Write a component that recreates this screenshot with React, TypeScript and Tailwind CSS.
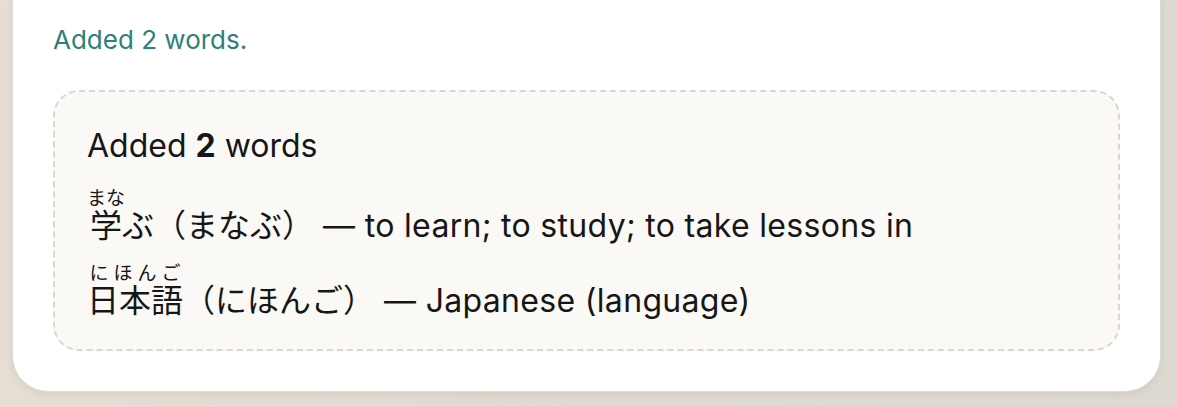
import React from 'react';

type Entry = {
  kanji: string;
  reading: string;
  okurigana: string;
  kana: string;
  meaning: string;
};

const entries: Entry[] = [
  { kanji: '学', reading: 'まな', okurigana: 'ぶ', kana: 'まなぶ', meaning: 'to learn; to study; to take lessons in' },
  { kanji: '日本語', reading: 'にほんご', okurigana: '', kana: 'にほんご', meaning: 'Japanese (language)' },
];

const font = "font-['Inter','Noto_Sans_CJK_JP',sans-serif]";

export default function App() {
  return (
    <div className={`${font} h-[407px] w-full bg-gradient-to-r from-[#e6ddd3] via-[#e0d9cf] to-[#dcd9d0] pl-3 pr-4 pb-[15px]`}>
      <div className="h-full rounded-b-[36px] border-x border-b border-[#dadada] bg-white px-10 pt-[22px] shadow-[0_2px_6px_rgba(120,100,80,0.12)]">
        {/* status line */}
        <p className="text-[26px] leading-[36px] text-[#2f7f7b]">Added 2 words.</p>

        {/* result box */}
        <div className="mt-8 rounded-[26px] border-2 border-dashed border-[#dbd6cf] bg-[#fbf9f5] px-8 pt-[34px] pb-[11px] text-[#161616]">
          <h2 className="text-[32px] leading-[40px]">
            Added <span className="font-bold">2</span> words
          </h2>
          <div className="mt-[22px]">
            {entries.map((e) => (
              <div key={e.kanji} className="text-[32px] leading-[75px] whitespace-nowrap">
                <ruby className="[ruby-align:space-around]">
                  {e.kanji}
                  <rt className="text-[19px]">{e.reading}</rt>
                </ruby>
                {e.okurigana}（{e.kana}） <span className="tracking-[0.01em]">— {e.meaning}</span>
              </div>
            ))}
          </div>
        </div>
      </div>
    </div>
  );
}
